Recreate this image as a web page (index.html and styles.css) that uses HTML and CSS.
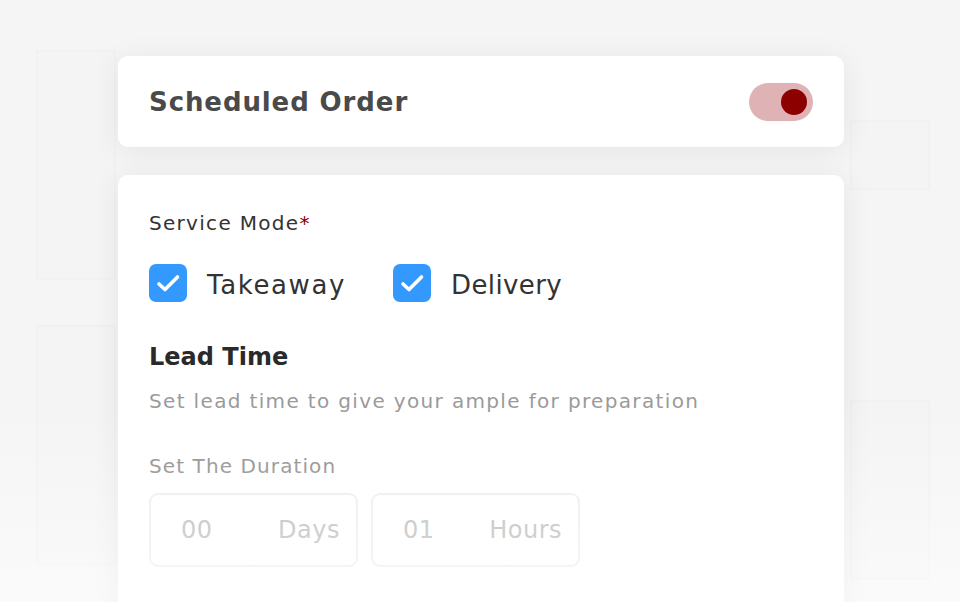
FILE: index.html
```html
<!DOCTYPE html>
<html>
<head>
<meta charset="utf-8">
<link rel="stylesheet" href="styles.css">
</head>
<body>
<div class="page">
  <div class="tile t1"></div>
  <div class="tile t2"></div>
  <div class="tile t3"></div>
  <div class="tile t4"></div>
  <div class="stack">
    <div class="card head">
      <h1 class="title">Scheduled Order</h1>
      <div class="toggle"><span class="knob"></span></div>
    </div>
    <div class="card body">
      <div class="label">Service Mode<span class="req">*</span></div>
      <div class="modes">
        <div class="mode">
          <span class="check"><svg viewBox="0 0 38 38" width="38" height="38"><path d="M10 20l6 5.5L28.5 13" fill="none" stroke="#fff" stroke-width="3.6" stroke-linecap="round" stroke-linejoin="round"/></svg></span>
          <span class="mode-text">Takeaway</span>
        </div>
        <div class="mode">
          <span class="check"><svg viewBox="0 0 38 38" width="38" height="38"><path d="M10 20l6 5.5L28.5 13" fill="none" stroke="#fff" stroke-width="3.6" stroke-linecap="round" stroke-linejoin="round"/></svg></span>
          <span class="mode-text">Delivery</span>
        </div>
      </div>
      <h2 class="section">Lead Time</h2>
      <p class="desc">Set lead time to give your ample for preparation</p>
      <div class="label muted">Set The Duration</div>
      <div class="fields">
        <div class="field"><span class="val">00</span><span class="unit">Days</span></div>
        <div class="field"><span class="val">01</span><span class="unit">Hours</span></div>
      </div>
    </div>
  </div>
  <div class="fade"></div>
</div>
</body>
</html>
```
FILE: styles.css
```css
* { box-sizing: border-box; }
html, body { margin: 0; padding: 0; }
body {
  width: 960px;
  height: 602px;
  overflow: hidden;
  background: #f5f5f5;
  font-family: "DejaVu Sans", "Open Sans", sans-serif;
}
.page {
  position: relative;
  width: 960px;
  height: 602px;
  overflow: hidden;
  padding: 56px 0 0 118px;
}
.tile {
  position: absolute;
  background: #f4f4f4;
  border: 2px solid #f1f1f1;
}
.t1 { left: 36px; top: 50px; width: 80px; height: 230px; }
.t2 { left: 36px; top: 325px; width: 80px; height: 240px; }
.t3 { left: 850px; top: 120px; width: 80px; height: 70px; }
.t4 { left: 850px; top: 400px; width: 80px; height: 180px; }
.stack {
  position: relative;
  width: 726px;
  display: flex;
  flex-direction: column;
  gap: 28px;
}
.card {
  background: #fff;
  border-radius: 10px;
  box-shadow: 0 4px 30px rgba(0,0,0,0.07);
}
.head {
  height: 91px;
  display: flex;
  align-items: center;
  justify-content: space-between;
  padding: 0 31px 0 31px;
}
.title {
  margin: 0;
  font-size: 26px;
  font-weight: 700;
  color: #4a4a4a;
  letter-spacing: 0.9px;
}
.toggle {
  width: 64px;
  height: 38px;
  border-radius: 19px;
  background: #dfb3b5;
  display: flex;
  align-items: center;
  justify-content: flex-end;
  padding-right: 6px;
}
.knob {
  width: 26px;
  height: 26px;
  border-radius: 50%;
  background: #8c0000;
}
.body {
  height: 460px;
  padding: 33px 31px 0 31px;
}
.label {
  font-size: 20px;
  color: #333;
  line-height: 30px;
  letter-spacing: 1.3px;
}
.req { color: #8c0000; }
.modes {
  display: flex;
  gap: 47px;
  margin-top: 26px;
}
.mode {
  display: flex;
  align-items: center;
  gap: 20px;
}
.check {
  width: 38px;
  height: 38px;
  border-radius: 7px;
  background: #3399ff;
  display: flex;
}
.mode-text {
  font-size: 26px;
  color: #333;
  letter-spacing: 1.6px;
  padding-top: 3px;
}
.mode + .mode .mode-text { letter-spacing: 0.4px; }
.section {
  margin: 38px 0 0 0;
  font-size: 24px;
  font-weight: 700;
  color: #2a2a2a;
  line-height: 34px;
}
.desc {
  margin: 12px 0 0 0;
  font-size: 20px;
  color: #9a9a9a;
  line-height: 30px;
  letter-spacing: 1.35px;
}
.muted {
  color: #888;
  margin-top: 35px;
  letter-spacing: 1.1px;
}
.fields {
  display: flex;
  gap: 13px;
  margin-top: 12px;
}
.field {
  width: 209px;
  height: 74px;
  border: 2px solid #ececec;
  border-radius: 9px;
  display: flex;
  align-items: center;
  justify-content: space-between;
  padding: 0 16px 0 30px;
  font-size: 24px;
  color: #b5b5b5;
  letter-spacing: 0.5px;
}
.fade {
  position: absolute;
  left: 0;
  right: 0;
  bottom: 0;
  height: 200px;
  background: linear-gradient(to bottom, rgba(255,255,255,0), rgba(255,255,255,0.55));
}
```
